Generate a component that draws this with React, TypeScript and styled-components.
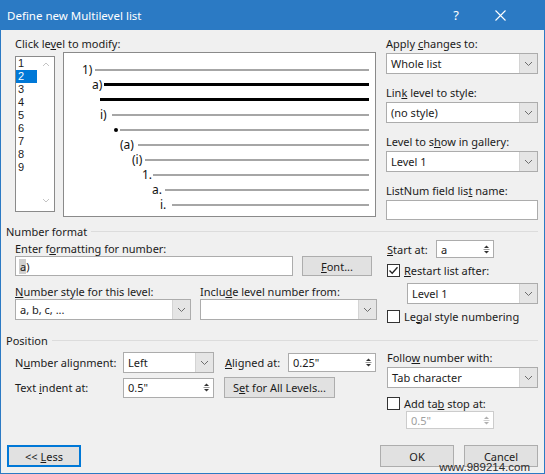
import React from "react";
import styled, { createGlobalStyle } from "styled-components";

const Global = createGlobalStyle`
  html, body { margin: 0; padding: 0; background: #f0f0f0; }
  body {
    font-family: "Noto Sans", "Open Sans", sans-serif;
    font-size: 11px;
    color: #1b1b1b;
  }
`;

const Dialog = styled.div`
  position: relative;
  width: 545px;
  height: 474px;
  box-sizing: border-box;
  background: #f0f0f0;
  border: 1px solid #2b7ac4;
  border-top: none;
  display: flex;
  flex-direction: column;
  overflow: hidden;
`;

const TitleBar = styled.div`
  height: 30px;
  flex: none;
  display: flex;
  align-items: center;
  background: #2b7ac4;
  color: #fff;
  font-size: 11.5px;
  padding-left: 6px;
`;

const TitleText = styled.div`
  flex: 1;
`;

const CaptionButton = styled.div<{ $last?: boolean }>`
  width: 44px;
  height: 30px;
  display: flex;
  align-items: center;
  justify-content: center;
  font-size: 13px;
  margin-right: ${(p) => (p.$last ? "22px" : "0")};
`;

const Body = styled.div`
  flex: 1;
  display: flex;
  flex-direction: column;
  padding: 6px 6px 6px 5px;
`;

const U = styled.span`
  text-decoration: underline;
  text-underline-offset: 1px;
`;

const Label = styled.div<{ $w?: number; $ml?: number; $mt?: number }>`
  line-height: 15px;
  height: 15px;
  white-space: nowrap;
  ${(p) => (p.$w ? `width: ${p.$w}px; flex: none;` : "")}
  margin-left: ${(p) => p.$ml ?? 0}px;
  margin-top: ${(p) => p.$mt ?? 0}px;
`;

/* ---------- top section ---------- */

const TopSection = styled.div`
  display: grid;
  grid-template-columns: 362px 152px;
  column-gap: 9px;
  margin-left: 9px;
`;

const LeftTop = styled.div`
  display: flex;
  flex-direction: column;
`;

const ListRow = styled.div`
  display: flex;
  align-items: flex-start;
  gap: 8px;
  margin-top: 1px;
`;

const LevelList = styled.div`
  width: 40px;
  height: 156px;
  box-sizing: border-box;
  margin-top: 4px;
  border: 1px solid #8a8a8a;
  background: #fff;
  display: flex;
`;

const LevelItems = styled.div`
  width: 21px;
  display: flex;
  flex-direction: column;
`;

const LevelItem = styled.div<{ $sel?: boolean }>`
  height: 13px;
  line-height: 13px;
  padding-left: 2px;
  font-family: "Liberation Sans", Arial, sans-serif;
  font-size: 11px;
  background: ${(p) => (p.$sel ? "#0078d7" : "transparent")};
  color: ${(p) => (p.$sel ? "#fff" : "#1b1b1b")};
`;

const LevelScroll = styled.div`
  flex: 1;
  display: flex;
  flex-direction: column;
  justify-content: space-between;
  align-items: center;
  padding: 5px 0 8px;
`;

const Preview = styled.div`
  width: 313px;
  height: 165px;
  box-sizing: border-box;
  border: 1px solid #8a8a8a;
  background: #fff;
  padding-top: 9px;
  display: flex;
  flex-direction: column;
`;

const PreviewRow = styled.div<{ $indent: number }>`
  height: 15px;
  display: flex;
  align-items: center;
  padding-left: ${(p) => p.$indent}px;
  padding-right: 6px;
`;

const PreviewNum = styled.span<{ $w: number }>`
  width: ${(p) => p.$w}px;
  flex: none;
  font-size: 12px;
  line-height: 15px;
  color: #111;
  display: flex;
  align-items: center;
`;

const Bullet = styled.span`
  width: 4px;
  height: 4px;
  border-radius: 50%;
  background: #000;
`;

const PreviewLine = styled.span<{ $dark?: boolean }>`
  flex: 1;
  height: ${(p) => (p.$dark ? 3 : 2)}px;
  background: ${(p) => (p.$dark ? "#000" : "#a6a6a6")};
`;

const RightCol = styled.div<{ $gap?: number }>`
  display: flex;
  flex-direction: column;
  gap: ${(p) => p.$gap ?? 0}px;
`;

const Field = styled.div`
  display: flex;
  flex-direction: column;
  gap: 2px;
`;

/* ---------- controls ---------- */

const SelectBox = styled.div<{ $w?: number; $h?: number; $ml?: number; $mt?: number }>`
  box-sizing: border-box;
  width: ${(p) => (p.$w ? `${p.$w}px` : "100%")};
  height: ${(p) => p.$h ?? 21}px;
  margin-left: ${(p) => p.$ml ?? 0}px;
  margin-top: ${(p) => p.$mt ?? 0}px;
  flex: none;
  display: flex;
  background: #fff;
  border: 1px solid #acacac;
`;

const SelectValue = styled.div`
  flex: 1;
  display: flex;
  align-items: center;
  padding-left: 4px;
  white-space: nowrap;
  overflow: hidden;
`;

const SelectButton = styled.div`
  width: 17px;
  flex: none;
  display: flex;
  align-items: center;
  justify-content: center;
  background: #e5e5e5;
  border-left: 1px solid #d4d4d4;
`;

const TextInput = styled.div<{ $w?: number; $h?: number }>`
  box-sizing: border-box;
  width: ${(p) => (p.$w ? `${p.$w}px` : "100%")};
  height: ${(p) => p.$h ?? 20}px;
  flex: none;
  display: flex;
  align-items: center;
  padding-left: 3px;
  background: #fff;
  border: 1px solid #acacac;
`;

const Caret = styled.span`
  background: #cfcfcf;
  padding: 0 0 0 1px;
`;

const SpinBox = styled.div<{ $w: number; $h?: number; $ml?: number; $mt?: number; $disabled?: boolean }>`
  box-sizing: border-box;
  width: ${(p) => p.$w}px;
  height: ${(p) => p.$h ?? 19}px;
  margin-left: ${(p) => p.$ml ?? 0}px;
  margin-top: ${(p) => p.$mt ?? 0}px;
  flex: none;
  display: flex;
  background: #fff;
  border: 1px solid ${(p) => (p.$disabled ? "#cccccc" : "#acacac")};
  color: ${(p) => (p.$disabled ? "#a0a0a0" : "#1b1b1b")};
`;

const SpinValue = styled.div`
  flex: 1;
  display: flex;
  align-items: center;
  padding-left: 4px;
`;

const SpinArrows = styled.div`
  width: 14px;
  flex: none;
  display: flex;
  align-items: center;
  justify-content: center;
`;

const CheckRow = styled.div<{ $mt?: number }>`
  display: flex;
  align-items: center;
  gap: 4px;
  height: 14px;
  margin-top: ${(p) => p.$mt ?? 0}px;
`;

const CheckBox = styled.div`
  box-sizing: border-box;
  width: 13px;
  height: 13px;
  flex: none;
  border: 1px solid #333;
  background: #fff;
  display: flex;
  align-items: center;
  justify-content: center;
`;

const Button = styled.div<{ $w: number; $h?: number; $focus?: boolean; $ml?: number }>`
  box-sizing: border-box;
  width: ${(p) => p.$w}px;
  height: ${(p) => p.$h ?? 22}px;
  margin-left: ${(p) => p.$ml ?? 0}px;
  flex: none;
  display: flex;
  align-items: center;
  justify-content: center;
  line-height: 13px;
  background: #e1e1e1;
  border: 1px solid ${(p) => (p.$focus ? "#0078d7" : "#adadad")};
  box-shadow: ${(p) => (p.$focus ? "inset 0 0 0 1px #0078d7" : "none")};
`;

/* ---------- sections ---------- */

const GroupHeader = styled.div<{ $mt: number }>`
  display: flex;
  align-items: center;
  gap: 4px;
  height: 15px;
  line-height: 15px;
  margin-top: ${(p) => p.$mt}px;
  &::after {
    content: "";
    flex: 1;
    height: 1px;
    background: #dcdcdc;
  }
`;

const Section = styled.div`
  display: grid;
  grid-template-columns: 362px 151px;
  column-gap: 10px;
  margin-left: 9px;
  align-items: start;
`;

const Stack = styled.div<{ $pt?: number }>`
  display: flex;
  flex-direction: column;
  padding-top: ${(p) => p.$pt ?? 0}px;
`;

const Row = styled.div<{ $mt?: number; $gap?: number }>`
  display: flex;
  align-items: center;
  gap: ${(p) => p.$gap ?? 0}px;
  margin-top: ${(p) => p.$mt ?? 0}px;
`;

const Pair = styled.div`
  display: grid;
  grid-template-columns: 176px 177px;
  column-gap: 9px;
`;

const Footer = styled.div`
  margin-top: auto;
  display: flex;
  align-items: center;
`;

const Watermark = styled.div`
  position: absolute;
  right: 14px;
  bottom: 1px;
  font-family: "Liberation Sans", Arial, sans-serif;
  font-size: 11.5px;
  line-height: 10px;
  color: #2a2a2a;
`;

/* ---------- icons ---------- */

const Chevron = () => (
  <svg width="9" height="6" viewBox="0 0 9 6">
    <polyline points="1,1 4.5,4.5 8,1" fill="none" stroke="#6d6d6d" strokeWidth="1" />
  </svg>
);

const ScrollChevron = ({ up }: { up?: boolean }) => (
  <svg width="8" height="5" viewBox="0 0 8 5">
    <polyline
      points={up ? "1,4 4,1 7,4" : "1,1 4,4 7,1"}
      fill="none"
      stroke="#c4c4c4"
      strokeWidth="1"
    />
  </svg>
);

const SpinIcon = ({ disabled }: { disabled?: boolean }) => {
  const c = disabled ? "#b0b0b0" : "#333";
  return (
    <svg width="9" height="13" viewBox="0 0 9 13">
      <path d="M2 5 L4.5 2.5 L7 5 Z" fill={c} />
      <line x1="1.5" y1="6.5" x2="7.5" y2="6.5" stroke={disabled ? "#d0d0d0" : "#9a9a9a"} strokeWidth="1" />
      <path d="M2 8 L4.5 10.5 L7 8 Z" fill={c} />
    </svg>
  );
};

const Check = () => (
  <svg width="11" height="11" viewBox="0 0 11 11">
    <polyline points="1.5,5.5 4.2,8.3 9.5,2.3" fill="none" stroke="#222" strokeWidth="1.3" />
  </svg>
);

const CloseIcon = () => (
  <svg width="11" height="11" viewBox="0 0 11 11">
    <path d="M0.5 0.5 L10.5 10.5 M10.5 0.5 L0.5 10.5" stroke="#fff" strokeWidth="1.1" />
  </svg>
);

/* ---------- composed controls ---------- */

const Select = ({ value, w, ml, mt }: { value?: string; w?: number; ml?: number; mt?: number }) => (
  <SelectBox $w={w} $ml={ml} $mt={mt}>
    <SelectValue>{value}</SelectValue>
    <SelectButton>
      <Chevron />
    </SelectButton>
  </SelectBox>
);

const Spin = ({
  value,
  w,
  h,
  ml,
  mt,
  disabled,
}: {
  value: string;
  w: number;
  h?: number;
  ml?: number;
  mt?: number;
  disabled?: boolean;
}) => (
  <SpinBox $w={w} $h={h} $ml={ml} $mt={mt} $disabled={disabled}>
    <SpinValue>{value}</SpinValue>
    <SpinArrows>
      <SpinIcon disabled={disabled} />
    </SpinArrows>
  </SpinBox>
);

const previewRows = [
  { label: "1)", x: 82, line: 95, dark: false },
  { label: "a)", x: 92, line: 104, dark: true },
  { label: "", x: 100, line: 100, dark: true },
  { label: "i)", x: 100, line: 112, dark: false },
  { label: "•", x: 114, line: 120, dark: false },
  { label: "(a)", x: 120, line: 138, dark: false },
  { label: "(i)", x: 132, line: 145, dark: false },
  { label: "1.", x: 142, line: 153, dark: false },
  { label: "a.", x: 152, line: 165, dark: false },
  { label: "i.", x: 160, line: 172, dark: false },
];

const PREVIEW_INNER_LEFT = 64;

export default function App() {
  return (
    <>
      <Global />
      <Dialog>
        <TitleBar>
          <TitleText>Define new Multilevel list</TitleText>
          <CaptionButton>?</CaptionButton>
          <CaptionButton $last>
            <CloseIcon />
          </CaptionButton>
        </TitleBar>

        <Body>
          <TopSection>
            <LeftTop>
              <Label>
                Click le<U>v</U>el to modify:
              </Label>
              <ListRow>
                <LevelList>
                  <LevelItems>
                    {[1, 2, 3, 4, 5, 6, 7, 8, 9].map((n) => (
                      <LevelItem key={n} $sel={n === 2}>
                        {n}
                      </LevelItem>
                    ))}
                  </LevelItems>
                  <LevelScroll>
                    <ScrollChevron up />
                    <ScrollChevron />
                  </LevelScroll>
                </LevelList>
                <Preview>
                  {previewRows.map((r, i) => (
                    <PreviewRow key={i} $indent={r.x - PREVIEW_INNER_LEFT}>
                      {r.line > r.x && (
                        <PreviewNum $w={r.line - r.x}>
                          {r.label === "•" ? <Bullet /> : r.label}
                        </PreviewNum>
                      )}
                      <PreviewLine $dark={r.dark} />
                    </PreviewRow>
                  ))}
                </Preview>
              </ListRow>
            </LeftTop>

            <RightCol $gap={11}>
              <Field>
                <Label>
                  Apply <U>c</U>hanges to:
                </Label>
                <Select value="Whole list" />
              </Field>
              <Field>
                <Label>
                  Lin<U>k</U> level to style:
                </Label>
                <Select value="(no style)" />
              </Field>
              <Field>
                <Label>
                  Level to s<U>h</U>ow in gallery:
                </Label>
                <Select value="Level 1" />
              </Field>
              <Field>
                <Label>
                  ListNum field lis<U>t</U> name:
                </Label>
                <TextInput />
              </Field>
            </RightCol>
          </TopSection>

          <GroupHeader $mt={4}>Number format</GroupHeader>
          <Section>
            <Stack $pt={2}>
              <Label>
                Enter f<U>o</U>rmatting for number:
              </Label>
              <Row $gap={9}>
                <TextInput $w={278}>
                  <Caret>a</Caret>)
                </TextInput>
                <Button $w={70} $h={20}>
                  <span>
                    <U>F</U>ont...
                  </span>
                </Button>
              </Row>
              <Pair>
                <Stack $pt={8}>
                  <Label>
                    <U>N</U>umber style for this level:
                  </Label>
                  <Select value="a, b, c, ..." />
                </Stack>
                <Stack $pt={8}>
                  <Label>
                    Inclu<U>d</U>e level number from:
                  </Label>
                  <Select value="" />
                </Stack>
              </Pair>
            </Stack>

            <Stack $pt={1}>
              <Row>
                <Label $w={49}>
                  <U>S</U>tart at:
                </Label>
                <Spin value="a" w={58} h={18} />
              </Row>
              <CheckRow $mt={5}>
                <CheckBox>
                  <Check />
                </CheckBox>
                <span>
                  <U>R</U>estart list after:
                </span>
              </CheckRow>
              <Select value="Level 1" w={131} ml={20} mt={6} />
              <CheckRow $mt={5}>
                <CheckBox />
                <span>
                  Le<U>g</U>al style numbering
                </span>
              </CheckRow>
            </Stack>
          </Section>

          <GroupHeader $mt={10}>Position</GroupHeader>
          <Section>
            <Stack $pt={4}>
              <Row>
                <Label $w={108}>
                  N<U>u</U>mber alignment:
                </Label>
                <Select value="Left" w={91} />
                <Label $w={63} $ml={11}>
                  <U>A</U>ligned at:
                </Label>
                <Spin value={'0.25"'} w={88} />
              </Row>
              <Row $mt={4}>
                <Label $w={108}>
                  Text <U>i</U>ndent at:
                </Label>
                <Spin value={'0.5"'} w={91} h={20} />
                <Button $w={111} $h={21} $ml={10}>
                  <span>
                    S<U>e</U>t for All Levels...
                  </span>
                </Button>
              </Row>
            </Stack>

            <Stack $pt={2}>
              <Label>
                Follo<U>w</U> number with:
              </Label>
              <Select value="Tab character" mt={2} />
              <CheckRow $mt={8}>
                <CheckBox />
                <span>
                  Add ta<U>b</U> stop at:
                </span>
              </CheckRow>
              <Spin value={'0.5"'} w={88} h={18} ml={19} mt={1} disabled />
            </Stack>
          </Section>

          <Footer>
            <Button $w={74} $focus $ml={1}>
              <span>
                &lt;&lt; <U>L</U>ess
              </span>
            </Button>
            <Button $w={74} $ml={299}>
              OK
            </Button>
            <Button $w={74} $ml={10}>
              Cancel
            </Button>
          </Footer>
        </Body>
        <Watermark>www.989214.com</Watermark>
      </Dialog>
    </>
  );
}
